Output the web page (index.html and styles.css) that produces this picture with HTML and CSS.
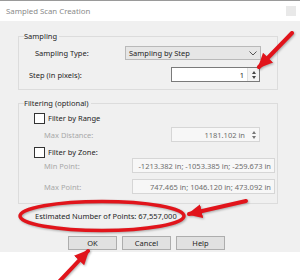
FILE: index.html
```html
<!DOCTYPE html>
<html>
<head>
    <title>Sampled Scan Creation</title>
    <link rel="stylesheet" href="styles.css">
</head>
<body>
    <div class="dialog">
        <!-- Title bar -->
        <div class="titlebar">
            <span>Sampled Scan Creation</span>
            <div class="close"></div>
        </div>

        <div class="content">
            <!-- Sampling -->
            <fieldset class="group group-sampling">
                <legend>Sampling</legend>
                <div class="row row-type">
                    <span class="label">Sampling Type:</span>
                    <div class="select">
                        <span>Sampling by Step</span>
                        <svg width="8" height="5" viewBox="0 0 8 5"><path d="M0.5 0.5 L4 4 L7.5 0.5" fill="none" stroke="#555" stroke-width="1"/></svg>
                    </div>
                </div>
                <div class="row row-step">
                    <span class="label">Step (in pixels):</span>
                    <div class="field field-step">
                        <span class="value">1</span>
                        <div class="spin"><i class="up"></i><i class="down"></i></div>
                    </div>
                </div>
            </fieldset>

            <!-- Filtering -->
            <fieldset class="group group-filter">
                <legend>Filtering (optional)</legend>
                <div class="row row-check">
                    <span class="check"></span>
                    <span>Filter by Range</span>
                </div>
                <div class="row row-dist">
                    <span class="label dim">Max Distance:</span>
                    <div class="field disabled field-dist">
                        <span class="value">1181.102 in</span>
                        <div class="spin"><i class="up"></i><i class="down"></i></div>
                    </div>
                </div>
                <div class="row row-check row-zone">
                    <span class="check"></span>
                    <span>Filter by Zone:</span>
                </div>
                <div class="row row-min">
                    <span class="label dim">Min Point:</span>
                    <div class="field disabled field-point">
                        <span class="value">-1213.382 in; -1053.385 in; -259.673 in</span>
                    </div>
                </div>
                <div class="row row-max">
                    <span class="label dim">Max Point:</span>
                    <div class="field disabled field-point">
                        <span class="value">747.465 in; 1046.120 in; 473.092 in</span>
                    </div>
                </div>
            </fieldset>

            <div class="estimate">Estimated Number of Points: 67,557,000</div>

            <div class="buttons">
                <div class="btn">OK</div>
                <div class="btn">Cancel</div>
                <div class="btn">Help</div>
            </div>
        </div>
    </div>

    <!-- Red annotations drawn over the screenshot -->
    <svg class="marks" width="300" height="280" viewBox="0 0 300 280">
        <defs>
            <marker id="head" markerUnits="userSpaceOnUse" markerWidth="16" markerHeight="16" refX="13" refY="8" orient="auto">
                <path d="M0 1 L15 8 L0 15 Z" fill="#e1141b"/>
            </marker>
        </defs>
        <ellipse cx="102" cy="216" rx="82" ry="14.5" fill="none" stroke="#e1141b" stroke-width="3.5"/>
        <line x1="292" y1="33" x2="259" y2="67" stroke="#e1141b" stroke-width="4" stroke-linecap="round" marker-end="url(#head)"/>
        <line x1="246" y1="201" x2="189" y2="214" stroke="#e1141b" stroke-width="4" stroke-linecap="round" marker-end="url(#head)"/>
        <line x1="55" y1="286" x2="88" y2="251" stroke="#e1141b" stroke-width="4" stroke-linecap="round" marker-end="url(#head)"/>
    </svg>
</body>
</html>
```
FILE: styles.css
```css
body {
    margin: 0;
    padding: 0;
    width: 300px;
    height: 280px;
    background: #fff;
    font-family: "Noto Sans", "Open Sans", sans-serif;
    font-size: 7.5px;
    color: #1e1e1e;
    position: relative;
    overflow: hidden;
    white-space: nowrap;
}
.dialog {
    width: 300px;
    border-top: 1px solid #9a9a9a;
}
.titlebar {
    height: 20px;
    display: flex;
    align-items: center;
    justify-content: space-between;
    padding: 0 4px 0 6px;
    color: #8a8a8a;
    font-size: 7.8px;
}
.close {
    width: 10px;
    height: 10px;
    background: #e9e9e9;
}
.content {
    background: #f0f0f0;
    height: 231px;
    padding: 10px 0 0 18px;
    box-sizing: border-box;
}
.group {
    margin: 0;
    padding: 0;
    width: 260px;
    box-sizing: border-box;
    border: 1px solid #dcdcdc;
}
.group legend {
    margin-left: 5px;
    padding: 0 2px 0 0;
    line-height: 10px;
}
.group-sampling {
    height: 59px;
}
.group-filter {
    margin-top: 8px;
    height: 106px;
}
.row {
    display: flex;
    align-items: center;
}
.label {
    flex: none;
}
.row-type {
    margin-top: 5px;
    height: 14px;
    padding-left: 16px;
}
.row-type .label {
    width: 90px;
}
.select {
    width: 136px;
    height: 14px;
    box-sizing: border-box;
    border: 1px solid #b9b9b9;
    background: #e6e6e6;
    display: flex;
    align-items: center;
    justify-content: space-between;
    padding: 0 3px 0 3px;
}
.row-step {
    margin-top: 7px;
    height: 15px;
    padding-left: 10px;
}
.row-step .label {
    width: 142px;
}
.field {
    height: 15px;
    box-sizing: border-box;
    border: 1px solid #7a7a7a;
    background: #fff;
    display: flex;
    align-items: center;
    justify-content: flex-end;
}
.field .value {
    padding-right: 3px;
}
.field-step {
    width: 89px;
}
.spin {
    width: 11px;
    height: 13px;
    display: flex;
    flex-direction: column;
    align-items: center;
    justify-content: center;
    gap: 2px;
    border-left: 1px solid #e0e0e0;
    background: #f4f4f4;
}
.spin i {
    width: 0;
    height: 0;
    border-left: 2.5px solid transparent;
    border-right: 2.5px solid transparent;
}
.spin .up {
    border-bottom: 3px solid #444;
}
.spin .down {
    border-top: 3px solid #444;
}
.disabled {
    border-color: #d6d6d6;
    background: #f7f7f7;
    color: #6e6e6e;
}
.disabled .spin {
    background: #f7f7f7;
    border-left: none;
}
.disabled .spin .up {
    border-bottom-color: #777;
}
.disabled .spin .down {
    border-top-color: #777;
}
.dim {
    color: #a8a8a8;
}
.row-check {
    margin-top: 5px;
    height: 10px;
    padding-left: 15px;
    gap: 3px;
}
.check {
    width: 9px;
    height: 9px;
    border: 1px solid #333;
    background: #fff;
}
.row-dist {
    margin-top: 4px;
    padding-left: 25px;
}
.row-dist .label {
    width: 127px;
}
.field-dist {
    width: 89px;
}
.row-zone {
    margin-top: 5px;
}
.row-min {
    margin-top: 1px;
    padding-left: 25px;
}
.row-max {
    margin-top: 6px;
    padding-left: 25px;
}
.row-min .label, .row-max .label {
    width: 88px;
}
.field-point {
    width: 143px;
}
.estimate {
    margin-top: 7px;
    padding-left: 17px;
    line-height: 10px;
}
.buttons {
    display: flex;
    gap: 5px;
    margin-top: 15px;
    padding-left: 50px;
}
.btn {
    width: 49px;
    height: 14px;
    box-sizing: border-box;
    border: 1px solid #adadad;
    background: #e1e1e1;
    display: flex;
    align-items: center;
    justify-content: center;
}
.marks {
    position: absolute;
    top: 0;
    left: 0;
    filter: drop-shadow(1px 1px 1px rgba(0, 0, 0, 0.3));
}
```
